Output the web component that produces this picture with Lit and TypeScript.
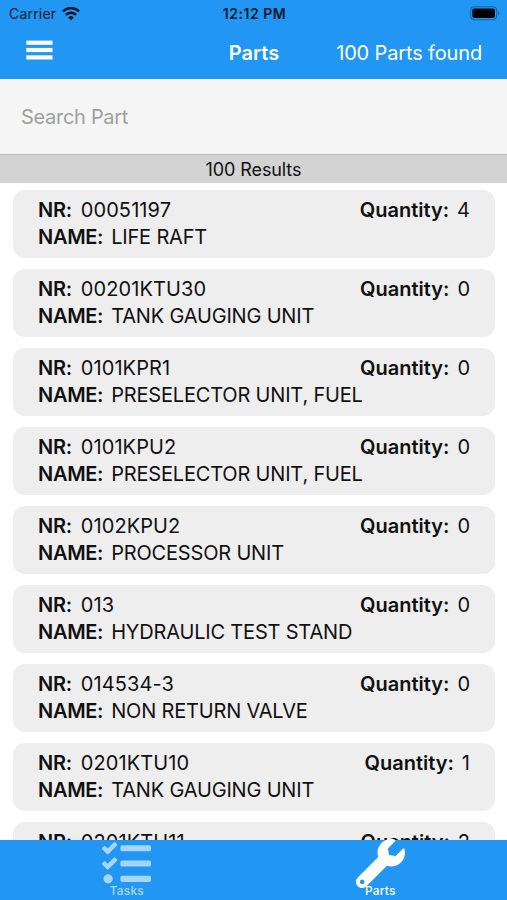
import { LitElement, html, css, svg } from "lit";
import { customElement, property } from "lit/decorators.js";

interface Part {
  nr: string;
  name: string;
  quantity: number;
}

const PARTS: Part[] = [
  { nr: "00051197", name: "LIFE RAFT", quantity: 4 },
  { nr: "00201KTU30", name: "TANK GAUGING UNIT", quantity: 0 },
  { nr: "0101KPR1", name: "PRESELECTOR UNIT, FUEL", quantity: 0 },
  { nr: "0101KPU2", name: "PRESELECTOR UNIT, FUEL", quantity: 0 },
  { nr: "0102KPU2", name: "PROCESSOR UNIT", quantity: 0 },
  { nr: "013", name: "HYDRAULIC TEST STAND", quantity: 0 },
  { nr: "014534-3", name: "NON RETURN VALVE", quantity: 0 },
  { nr: "0201KTU10", name: "TANK GAUGING UNIT", quantity: 1 },
  { nr: "0201KTU11", name: "TANK GAUGING UNIT", quantity: 2 },
];

const tasksIcon = svg`<path d="M139.61 35.5a12 12 0 0 0-17 0L58.93 98.81l-22.7-22.12a12 12 0 0 0-17 0L3.53 92.41a12 12 0 0 0 0 17l47.59 47.4a12.78 12.78 0 0 0 17.61 0l15.59-15.62L156.52 69a12.09 12.09 0 0 0 .09-17zm0 159.19a12 12 0 0 0-17 0l-63.68 63.72-22.7-22.1a12 12 0 0 0-17 0L3.53 252a12 12 0 0 0 0 17L51 316.5a12.77 12.77 0 0 0 17.6 0l15.7-15.69 72.2-72.22a12 12 0 0 0 .09-16.9zM64 368c-26.49 0-48.59 21.5-48.59 48S37.53 464 64 464a48 48 0 0 0 0-96zm432 16H208a16 16 0 0 0-16 16v32a16 16 0 0 0 16 16h288a16 16 0 0 0 16-16v-32a16 16 0 0 0-16-16zm0-320H208a16 16 0 0 0-16 16v32a16 16 0 0 0 16 16h288a16 16 0 0 0 16-16V80a16 16 0 0 0-16-16zm0 160H208a16 16 0 0 0-16 16v32a16 16 0 0 0 16 16h288a16 16 0 0 0 16-16v-32a16 16 0 0 0-16-16z"/>`;

const wrenchIcon = svg`<path d="M507.73 109.1c-2.24-9.03-13.54-12.09-20.12-5.51l-74.36 74.36-67.88-11.31-11.31-67.88 74.36-74.36c6.62-6.62 3.43-17.9-5.66-20.16-47.38-11.74-99.55.91-136.58 37.93-39.64 39.64-50.55 97.1-34.05 147.2L18.74 402.76c-24.99 24.99-24.99 65.51 0 90.5 24.99 24.99 65.51 24.99 90.5 0l213.21-213.21c50.12 16.71 107.47 5.68 147.37-34.22 37.07-37.07 49.7-89.32 37.91-136.73zM64 472c-13.25 0-24-10.75-24-24 0-13.26 10.75-24 24-24s24 10.74 24 24c0 13.25-10.75 24-24 24z"/>`;

@customElement("part-card")
export class PartCard extends LitElement {
  @property({ attribute: false }) part!: Part;

  static styles = css`
    :host {
      display: block;
      flex: none;
      box-sizing: border-box;
      height: 68px;
      padding: 7px 25px 0;
      border-radius: 12px;
      background: #eeeeee;
    }
    .line {
      display: flex;
      justify-content: space-between;
      height: 27px;
      line-height: 27px;
    }
    .field {
      display: flex;
      gap: 8px;
      white-space: nowrap;
    }
    .label {
      font-weight: 600;
      letter-spacing: -0.3px;
    }
    .nr {
      gap: 9px;
      letter-spacing: 0.1px;
    }
    .name {
      letter-spacing: -0.18px;
    }
    .quantity .label {
      letter-spacing: 0;
    }
  `;

  render() {
    const { nr, name, quantity } = this.part;
    return html`
      <div class="line">
        <div class="field nr"><span class="label">NR:</span><span>${nr}</span></div>
        <div class="field quantity"><span class="label">Quantity:</span><span>${quantity}</span></div>
      </div>
      <div class="line">
        <div class="field name"><span class="label">NAME:</span><span>${name}</span></div>
      </div>
    `;
  }
}

@customElement("app-root")
export class AppRoot extends LitElement {
  static styles = css`
    :host {
      display: flex;
      flex-direction: column;
      height: 900px;
      overflow: hidden;
      background: #fff;
      color: #111;
      font-family: Inter, "Liberation Sans", sans-serif;
      font-size: 20px;
    }
    .header {
      flex: none;
      height: 79px;
      background: #2196f3;
    }
    .status {
      display: grid;
      grid-template-columns: 1fr auto 1fr;
      align-items: center;
      height: 27px;
      padding: 0 7px 0 9px;
      font-size: 14px;
      color: #0a1a2b;
    }
    .carrier {
      display: flex;
      align-items: center;
      gap: 6px;
      letter-spacing: 0.2px;
    }
    .clock {
      font-weight: 600;
      letter-spacing: 0.55px;
    }
    .battery {
      justify-self: end;
    }
    .bar {
      display: grid;
      grid-template-columns: 1fr auto 1fr;
      align-items: center;
      height: 52px;
      padding: 0 25px 0 26px;
      color: #fff;
    }
    .menu {
      margin-top: -6px;
    }
    .title {
      font-weight: 600;
      letter-spacing: 0;
    }
    .found {
      justify-self: end;
      letter-spacing: -0.15px;
    }
    .search {
      flex: none;
      display: flex;
      align-items: center;
      box-sizing: border-box;
      height: 76px;
      padding: 0 21px;
      border-bottom: 1px solid #b9b9b9;
      background: #f5f5f5;
      color: #9f9f9f;
      letter-spacing: -0.3px;
    }
    .results {
      flex: none;
      height: 28px;
      line-height: 30px;
      text-align: center;
      font-size: 18px;
      letter-spacing: -0.1px;
      background: #d3d3d3;
    }
    .list {
      flex: 1;
      min-height: 0;
      overflow: hidden;
      display: flex;
      flex-direction: column;
      gap: 11px;
      padding: 7px 12px 0 13px;
    }
    .tabs {
      flex: none;
      display: grid;
      grid-template-columns: 1fr 1fr;
      height: 60px;
      background: #2196f3;
      color: #fff;
    }
    .tab {
      display: flex;
      flex-direction: column;
      align-items: center;
    }
    .tab svg {
      display: block;
      flex: none;
      width: 49px;
      height: 49px;
      margin-top: -1px;
      fill: currentColor;
    }
    .idle {
      color: #a6d5fa;
    }
    .caption {
      margin-top: -5px;
      line-height: 16px;
      font-size: 12px;
      font-weight: 500;
      letter-spacing: 0.2px;
    }
  `;

  render() {
    return html`
      <div class="header">
        <div class="status">
          <div class="carrier">
            <span>Carrier</span>
            <svg width="18" height="14" viewBox="0 0 18 14" fill="none" stroke="#0a1420" stroke-width="2.5">
              <path d="M0.9 4.4a11.5 11.5 0 0 1 16.2 0" />
              <path d="M3.9 7.8a7.2 7.2 0 0 1 10.2 0" />
              <path d="M9 13.2L6.2 10.4a4 4 0 0 1 5.6 0z" fill="#0a1420" stroke="none" />
            </svg>
          </div>
          <div class="clock">12:12 PM</div>
          <svg class="battery" width="30" height="15" viewBox="0 0 30 15">
            <rect x="0.6" y="0.7" width="26" height="13" rx="3.6" fill="none" stroke="#17669f" stroke-width="1.1" />
            <rect x="2.3" y="2.4" width="22.6" height="9.6" rx="2" fill="#000" />
            <path d="M28 5v4.6a2.6 2.6 0 0 0 0-4.6z" fill="#17669f" />
          </svg>
        </div>
        <div class="bar">
          <svg class="menu" width="27" height="20" viewBox="0 0 27 20" fill="#fff">
            <rect x="0.3" y="0.6" width="26.2" height="4.2" />
            <rect x="0.3" y="7.9" width="26.2" height="4.2" />
            <rect x="0.3" y="15.3" width="26.2" height="4.2" />
          </svg>
          <div class="title">Parts</div>
          <div class="found">100 Parts found</div>
        </div>
      </div>
      <div class="search">Search Part</div>
      <div class="results">100 Results</div>
      <div class="list">${PARTS.map((part) => html`<part-card .part=${part}></part-card>`)}</div>
      <div class="tabs">
        <div class="tab idle">
          <svg viewBox="0 0 512 512">${tasksIcon}</svg>
          <span class="caption">Tasks</span>
        </div>
        <div class="tab">
          <svg viewBox="0 0 512 512">${wrenchIcon}</svg>
          <span class="caption">Parts</span>
        </div>
      </div>
    `;
  }
}
